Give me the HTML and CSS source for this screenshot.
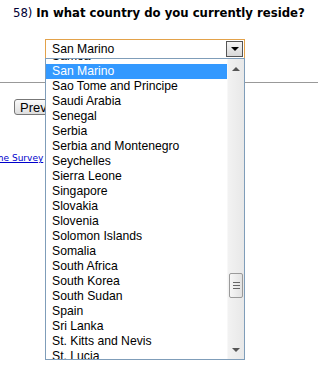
FILE: index.html
```html
<!DOCTYPE html>
<html lang="en">
<head>
    <meta charset="UTF-8">
    <title>Survey Question</title>
    <link rel="stylesheet" href="styles.css">
</head>
<body>
    <div class="page">
        <!-- Question -->
        <div class="question">
            <span class="qnum">58)</span> <b>In what country do you currently reside?</b>
        </div>

        <div class="answer">
            <div class="select">
                <span class="select-value">San Marino</span>
                <span class="select-btn"><span class="arrow-down"></span></span>
            </div>

            <!-- Open dropdown list -->
            <div class="dropdown">
                <ul class="options">
                    <li>Samoa</li>
                    <li class="selected">San Marino</li>
                    <li>Sao Tome and Principe</li>
                    <li>Saudi Arabia</li>
                    <li>Senegal</li>
                    <li>Serbia</li>
                    <li>Serbia and Montenegro</li>
                    <li>Seychelles</li>
                    <li>Sierra Leone</li>
                    <li>Singapore</li>
                    <li>Slovakia</li>
                    <li>Slovenia</li>
                    <li>Solomon Islands</li>
                    <li>Somalia</li>
                    <li>South Africa</li>
                    <li>South Korea</li>
                    <li>South Sudan</li>
                    <li>Spain</li>
                    <li>Sri Lanka</li>
                    <li>St. Kitts and Nevis</li>
                    <li>St. Lucia</li>
                </ul>
                <div class="scrollbar">
                    <span class="arrow-up small"></span>
                    <span class="thumb">
                        <span class="grip"></span>
                        <span class="grip"></span>
                        <span class="grip"></span>
                    </span>
                    <span class="arrow-down small"></span>
                </div>
            </div>
        </div>

        <hr class="divider">

        <div class="nav">
            <button class="prev-btn">Previous</button>
        </div>

        <div class="links">
            <a href="#">Resume Survey</a>
        </div>
    </div>
</body>
</html>
```

FILE: styles.css
```css
body {
    margin: 0;
    font-family: "Liberation Sans", Arial, sans-serif;
    background: #fff;
    overflow: hidden;
}

.page {
    position: relative;
    width: 318px;
    height: 375px;
    overflow: hidden;
}

.question {
    padding: 5px 0 0 13px;
    font-family: "DejaVu Sans", Verdana, sans-serif;
    font-size: 11.7px;
    line-height: 16px;
    color: #000;
    height: 34px;
    box-sizing: border-box;
    white-space: nowrap;
}

.qnum {
    color: #000033;
    font-weight: normal;
}

.question b {
    font-weight: bold;
}

.answer {
    position: relative;
    padding-left: 45px;
    padding-top: 5px;
    height: 48px;
    box-sizing: border-box;
}

.select {
    display: flex;
    align-items: center;
    width: 200px;
    height: 20px;
    box-sizing: border-box;
    border: 1px solid #e3a24a;
    background: #fff;
}

.select-value {
    flex: 1;
    padding-left: 6px;
    font-size: 12.2px;
    color: #000;
}

.select-btn {
    width: 17px;
    height: 16px;
    margin-right: 1px;
    box-sizing: border-box;
    border: 1px solid #555;
    background: linear-gradient(#f4f4f4, #d8d8d8);
    display: flex;
    align-items: center;
    justify-content: center;
}

.arrow-down {
    width: 0;
    height: 0;
    border-left: 4px solid transparent;
    border-right: 4px solid transparent;
    border-top: 4px solid #000;
}

.arrow-up {
    width: 0;
    height: 0;
    border-left: 4px solid transparent;
    border-right: 4px solid transparent;
    border-bottom: 4px solid #000;
}

.arrow-down.small {
    border-top-color: #555;
}

.arrow-up.small {
    border-bottom-color: #555;
}

/* the open list lies over the page below it */
.dropdown {
    position: absolute;
    left: 45px;
    top: 24px;
    width: 200px;
    height: 302px;
    box-sizing: border-box;
    border: 1px solid #7f9db9;
    background: #fff;
    overflow: hidden;
    z-index: 2;
    display: flex;
}

.options {
    list-style: none;
    margin: -10px 0 0 0;
    padding: 0;
    flex: 1;
    font-size: 12.2px;
    color: #000;
}

.options li {
    height: 15px;
    line-height: 15px;
    padding-left: 6px;
    white-space: nowrap;
}

.options li.selected {
    background: #3399ff;
    color: #fff;
}

.scrollbar {
    width: 17px;
    background: linear-gradient(to right, #f2f2f2, #e8e8e8);
    border-left: 1px solid #f8f8f8;
    display: flex;
    flex-direction: column;
    align-items: center;
    padding: 8px 0 7px;
    box-sizing: border-box;
}

.thumb {
    margin-top: auto;
    margin-bottom: 50px;
    width: 14px;
    height: 25px;
    box-sizing: border-box;
    border: 1px solid #9a9a9a;
    border-radius: 2px;
    background: linear-gradient(to right, #f6f6f6, #e2e2e2);
    display: flex;
    flex-direction: column;
    align-items: center;
    justify-content: center;
    gap: 2px;
}

.grip {
    width: 7px;
    height: 1px;
    background: #666;
}

.divider {
    margin: 0;
    border: 0;
    border-top: 1px solid #999;
    height: 0;
}

.nav {
    padding: 15px 0 0 14px;
    height: 60px;
    box-sizing: border-box;
}

.prev-btn {
    font-family: "Liberation Sans", Arial, sans-serif;
    font-size: 13px;
    height: 16px;
    padding: 0 5px;
    border: 1px solid #777;
    border-radius: 3px;
    background: linear-gradient(#fafafa, #dedede);
    color: #000;
}

.links {
    margin-left: -27px;
    font-family: "DejaVu Sans", Verdana, sans-serif;
    font-size: 9px;
    padding-top: 10px;
    white-space: nowrap;
}

.links a {
    color: #0000cc;
}
```
